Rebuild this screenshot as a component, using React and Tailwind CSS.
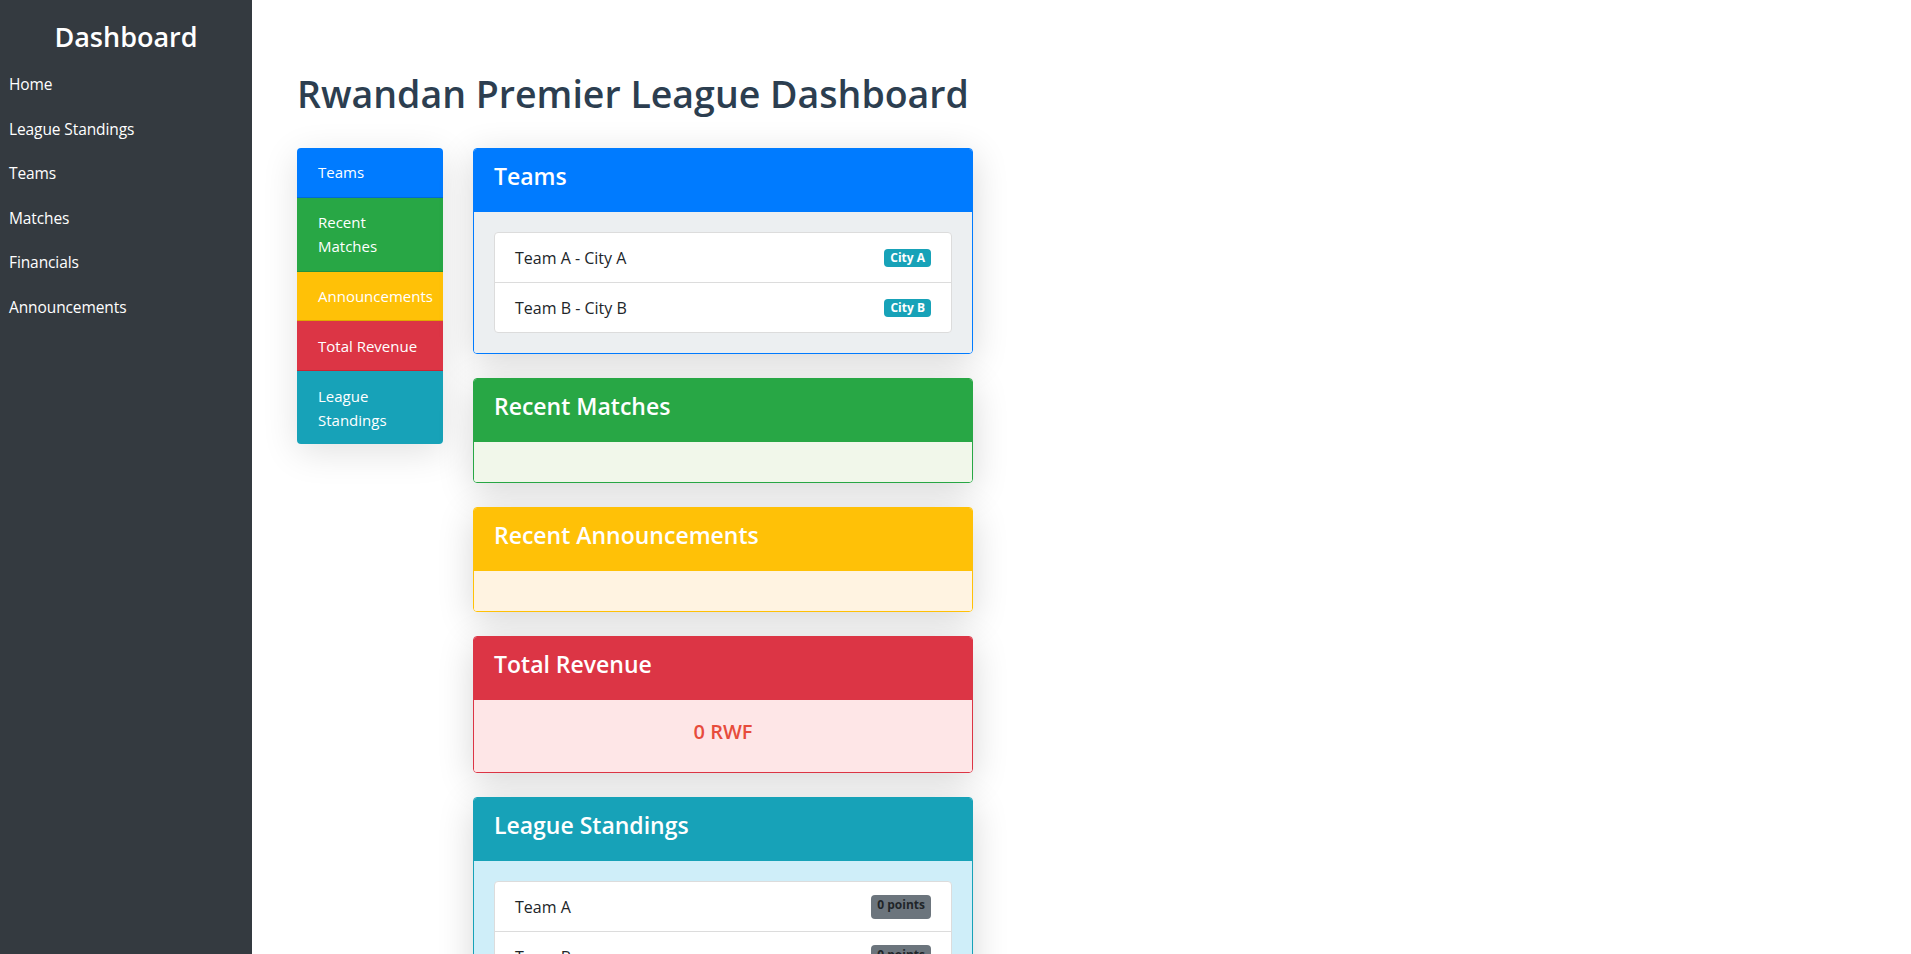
import React from 'react';

const navLinks = ['Home', 'League Standings', 'Teams', 'Matches', 'Financials', 'Announcements'];

const quickLinks = [
  { label: 'Teams', bg: 'bg-[#007bff]', border: 'border-[#0069d9]' },
  { label: 'Recent Matches', bg: 'bg-[#28a745]', border: 'border-[#23923d]' },
  { label: 'Announcements', bg: 'bg-[#ffc107]', border: 'border-[#e0a800]' },
  { label: 'Total Revenue', bg: 'bg-[#dc3545]', border: 'border-[#c82333]' },
  { label: 'League Standings', bg: 'bg-[#17a2b8]', border: 'border-[#138496]' },
];

function Card({ title, head, body, border, children }) {
  return (
    <div className={`mb-6 rounded border ${border} shadow-[0_8px_36px_rgba(0,0,0,0.16)] overflow-hidden`}>
      <div className={`${head} px-5 pt-[13px] pb-3 border-b ${border}`}>
        <h4 className="text-[23px] font-semibold leading-[29px] mb-2 text-white">{title}</h4>
      </div>
      <div className={`${body} p-5`}>{children}</div>
    </div>
  );
}

function ListGroup({ items }) {
  return (
    <ul className="bg-white rounded border border-[#dcdcdc]">
      {items.map((it, i) => (
        <li
          key={it.text}
          className={`flex items-center justify-between px-5 py-[12.5px] leading-6 text-[16px] text-[#212529] ${i > 0 ? 'border-t border-[#dcdcdc]' : ''}`}
        >
          <span>{it.text}</span>
          {it.badge}
        </li>
      ))}
    </ul>
  );
}

const cityBadge = (t) => (
  <span className="bg-[#17a2b8] text-white text-[12px] font-bold leading-[18px] px-[6px] rounded-[4px]">{t}</span>
);

const pointsBadge = (
  <span className="bg-[#6c757d] text-[#212529] text-[12px] font-bold leading-[14px] pt-[3px] pb-[7px] px-[6px] rounded-[4px]">0 points</span>
);

export default function App() {
  return (
    <div className="min-h-screen bg-white" style={{ fontFamily: '"Open Sans", "Noto Sans", sans-serif' }}>
      <aside className="fixed top-0 left-0 h-screen w-[252px] bg-[#343a40] text-white pt-[20px]">
        <h2 className="text-center text-[27px] font-semibold leading-[34px] mb-[8px]">Dashboard</h2>
        <nav className="flex flex-col">
          {navLinks.map((l) => (
            <a key={l} className="block px-[9px] py-[10px] leading-[24.5px] text-[15.5px] text-white tracking-[-0.1px]">{l}</a>
          ))}
        </nav>
      </aside>

      <main className="ml-[252px] pl-[45px] pt-[70px] pb-6">
        <h1 className="text-[37.5px] font-semibold leading-[48px] text-[#2c3e50] mb-[30px]">Rwandan Premier League Dashboard</h1>

        <div className="flex items-start gap-[30px]">
          <div className="w-[146px] rounded overflow-hidden shadow-[0_8px_36px_rgba(0,0,0,0.12)]">
            {quickLinks.map((q, i) => (
              <a
                key={q.label}
                className={`block ${q.bg} text-white text-[15px] leading-6 pl-[21px] pr-[20px] py-[12.4px] ${i < quickLinks.length - 1 ? `border-b ${q.border}` : ''}`}
              >
                {q.label}
              </a>
            ))}
          </div>

          <div className="w-[500px]">
            <Card title="Teams" head="bg-[#007bff]" body="bg-[#eceff1]" border="border-[#007bff]">
              <ListGroup
                items={[
                  { text: 'Team A - City A', badge: cityBadge('City A') },
                  { text: 'Team B - City B', badge: cityBadge('City B') },
                ]}
              />
            </Card>

            <Card title="Recent Matches" head="bg-[#28a745]" body="bg-[#f1f7ea]" border="border-[#28a745]" />

            <Card title="Recent Announcements" head="bg-[#ffc107]" body="bg-[#fff3e1]" border="border-[#ffc107]" />

            <Card title="Total Revenue" head="bg-[#dc3545]" body="bg-[#fee6e7]" border="border-[#dc3545]">
              <h5 className="text-center text-[20px] font-semibold leading-6 mb-2 text-[#e74c3c]">0 RWF</h5>
            </Card>

            <Card title="League Standings" head="bg-[#17a2b8]" body="bg-[#cfeef9]" border="border-[#17a2b8]">
              <ListGroup
                items={[
                  { text: 'Team A', badge: pointsBadge },
                  { text: 'Team B', badge: pointsBadge },
                ]}
              />
            </Card>
          </div>
        </div>
      </main>
    </div>
  );
}
